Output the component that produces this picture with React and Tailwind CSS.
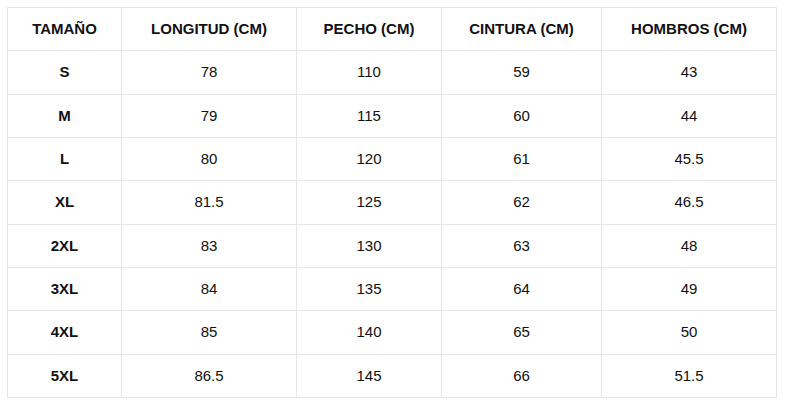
import React from "react";

const headers = ["TAMAÑO", "LONGITUD (CM)", "PECHO (CM)", "CINTURA (CM)", "HOMBROS (CM)"];
const rows = [
  ["S", "78", "110", "59", "43"],
  ["M", "79", "115", "60", "44"],
  ["L", "80", "120", "61", "45.5"],
  ["XL", "81.5", "125", "62", "46.5"],
  ["2XL", "83", "130", "63", "48"],
  ["3XL", "84", "135", "64", "49"],
  ["4XL", "85", "140", "65", "50"],
  ["5XL", "86.5", "145", "66", "51.5"],
];

export default function App() {
  return (
    <div className="w-[785px] h-[406px] bg-white pt-[7px] pl-[7px]" style={{ fontFamily: '"Liberation Sans", Arial, sans-serif' }}>
      <div className="grid grid-cols-[114px_175px_145px_160px_175px] grid-rows-[repeat(9,1fr)] w-[770px] h-[391px] border-l border-t border-[#e6e6e6] text-[15px] text-[#111111]">
        {headers.map((h) => (
          <div key={h} className="flex items-center justify-center border-r border-b border-[#e6e6e6] font-bold">
            {h}
          </div>
        ))}
        {rows.map((r) =>
          r.map((c, i) => (
            <div
              key={r[0] + i}
              className={`flex items-center justify-center border-r border-b border-[#e6e6e6] ${i === 0 ? "font-bold" : ""}`}
            >
              {c}
            </div>
          ))
        )}
      </div>
    </div>
  );
}
